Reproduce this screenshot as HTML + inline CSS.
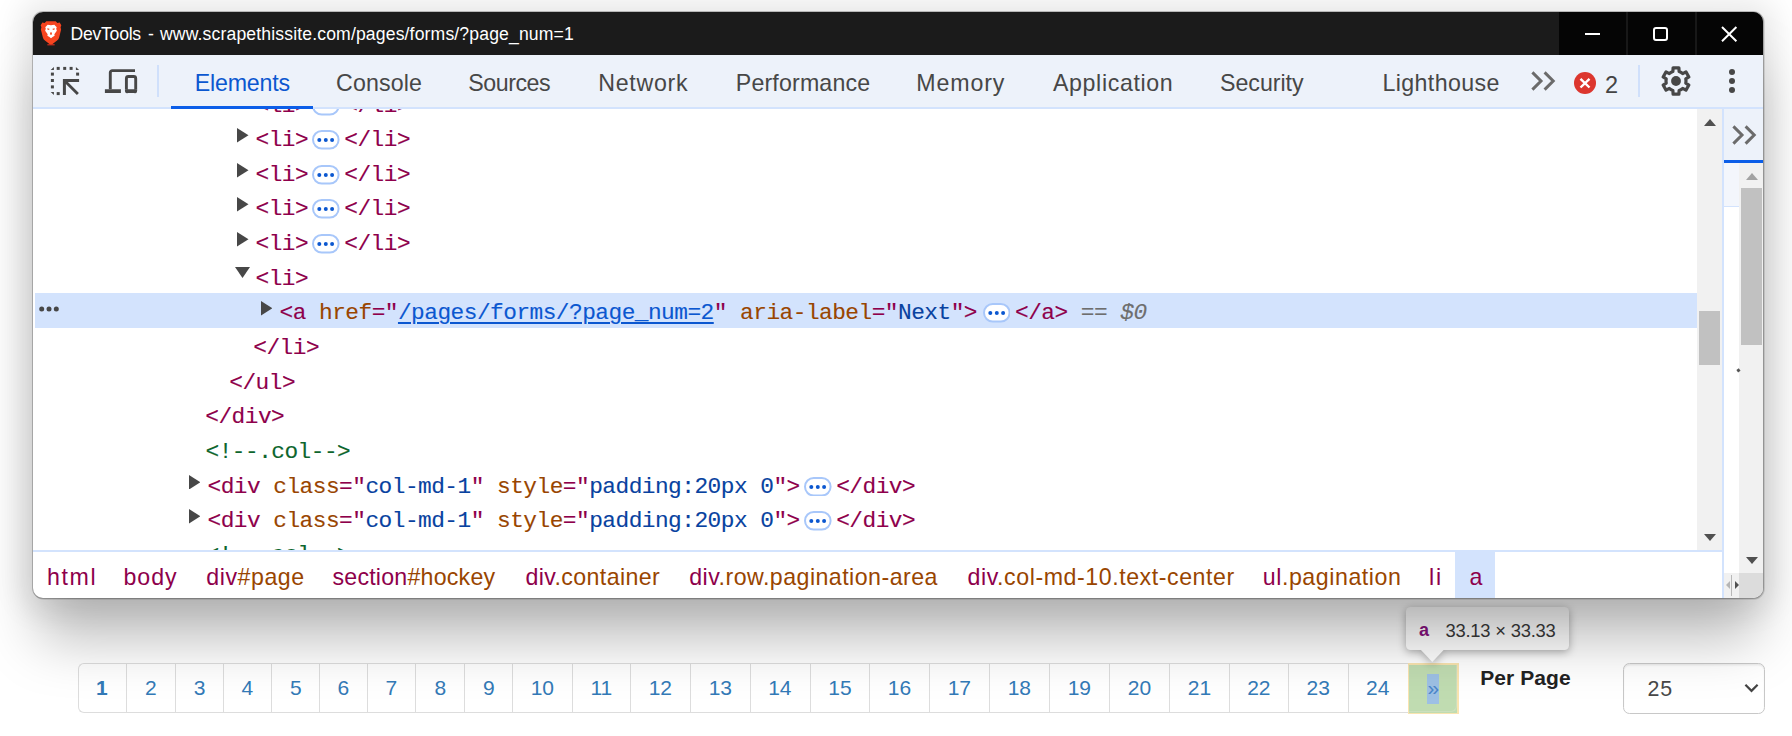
<!DOCTYPE html>
<html lang="en"><head><meta charset="utf-8"><title>DevTools - www.scrapethissite.com/pages/forms/?page_num=1</title>
<style>
html,body{margin:0;padding:0}
body{width:1792px;height:736px;overflow:hidden;background:#fff;position:relative;font-family:'Liberation Sans', sans-serif}
.t,.m,.a,.pill,.abs{position:absolute;white-space:pre}
.t{display:block}
.m{font:22.8px/30px 'Liberation Mono', monospace;-webkit-text-stroke:0.12px currentColor;letter-spacing:-0.522px}
#pg{position:absolute;left:0;top:0;width:1792px;height:736px}
.pc{position:absolute;top:663px;height:49.5px;box-sizing:border-box;border:1px solid #ddd;border-right:none;background:#fff}
#win{position:absolute;left:33px;top:12px;width:1730px;height:586px;border-radius:10px;background:#fff;
 box-shadow:0 0 0 1px rgba(0,0,0,.2), .8px .8px 0 1px rgba(0,0,0,.13), 0 48px 56px -6px rgba(0,0,0,.255), 0 0 30px 12px rgba(0,0,0,.09)}
#clip{position:absolute;left:0;top:0;width:1730px;height:586px;border-radius:10px;overflow:hidden}
#in{position:absolute;left:-33px;top:-12px;width:1792px;height:736px}
.r{position:absolute}
</style></head>
<body>
<div id="pg">
<div class="pc" style="left:78.25px;width:47.75px;border-radius:6px 0 0 6px"></div>
<span class="t" style="left:96.12px;top:673.72px;font:bold 21px/28px 'Liberation Sans', sans-serif;color:#337ab7">1</span>
<div class="pc" style="left:126.00px;width:48.75px"></div>
<span class="t" style="left:144.88px;top:673.72px;font:normal 21px/28px 'Liberation Sans', sans-serif;color:#337ab7">2</span>
<div class="pc" style="left:174.75px;width:48.00px"></div>
<span class="t" style="left:193.75px;top:673.72px;font:normal 21px/28px 'Liberation Sans', sans-serif;color:#337ab7">3</span>
<div class="pc" style="left:222.75px;width:48.25px"></div>
<span class="t" style="left:241.38px;top:673.72px;font:normal 21px/28px 'Liberation Sans', sans-serif;color:#337ab7">4</span>
<div class="pc" style="left:271.00px;width:48.00px"></div>
<span class="t" style="left:290.00px;top:673.72px;font:normal 21px/28px 'Liberation Sans', sans-serif;color:#337ab7">5</span>
<div class="pc" style="left:319.00px;width:48.00px"></div>
<span class="t" style="left:337.50px;top:673.72px;font:normal 21px/28px 'Liberation Sans', sans-serif;color:#337ab7">6</span>
<div class="pc" style="left:367.00px;width:48.00px"></div>
<span class="t" style="left:385.50px;top:673.72px;font:normal 21px/28px 'Liberation Sans', sans-serif;color:#337ab7">7</span>
<div class="pc" style="left:415.00px;width:49.00px"></div>
<span class="t" style="left:434.50px;top:673.72px;font:normal 21px/28px 'Liberation Sans', sans-serif;color:#337ab7">8</span>
<div class="pc" style="left:464.00px;width:48.00px"></div>
<span class="t" style="left:483.00px;top:673.72px;font:normal 21px/28px 'Liberation Sans', sans-serif;color:#337ab7">9</span>
<div class="pc" style="left:512.00px;width:60.00px"></div>
<span class="t" style="left:530.66px;top:673.72px;font:normal 21px/28px 'Liberation Sans', sans-serif;color:#337ab7">10</span>
<div class="pc" style="left:572.00px;width:58.00px"></div>
<span class="t" style="left:590.44px;top:673.72px;font:normal 21px/28px 'Liberation Sans', sans-serif;color:#337ab7">11</span>
<div class="pc" style="left:630.00px;width:60.00px"></div>
<span class="t" style="left:648.66px;top:673.72px;font:normal 21px/28px 'Liberation Sans', sans-serif;color:#337ab7">12</span>
<div class="pc" style="left:690.00px;width:60.00px"></div>
<span class="t" style="left:708.66px;top:673.72px;font:normal 21px/28px 'Liberation Sans', sans-serif;color:#337ab7">13</span>
<div class="pc" style="left:750.00px;width:60.00px"></div>
<span class="t" style="left:768.16px;top:673.72px;font:normal 21px/28px 'Liberation Sans', sans-serif;color:#337ab7">14</span>
<div class="pc" style="left:810.00px;width:59.25px"></div>
<span class="t" style="left:828.29px;top:673.72px;font:normal 21px/28px 'Liberation Sans', sans-serif;color:#337ab7">15</span>
<div class="pc" style="left:869.25px;width:59.75px"></div>
<span class="t" style="left:887.79px;top:673.72px;font:normal 21px/28px 'Liberation Sans', sans-serif;color:#337ab7">16</span>
<div class="pc" style="left:929.00px;width:60.00px"></div>
<span class="t" style="left:947.66px;top:673.72px;font:normal 21px/28px 'Liberation Sans', sans-serif;color:#337ab7">17</span>
<div class="pc" style="left:989.00px;width:60.00px"></div>
<span class="t" style="left:1007.66px;top:673.72px;font:normal 21px/28px 'Liberation Sans', sans-serif;color:#337ab7">18</span>
<div class="pc" style="left:1049.00px;width:60.00px"></div>
<span class="t" style="left:1067.66px;top:673.72px;font:normal 21px/28px 'Liberation Sans', sans-serif;color:#337ab7">19</span>
<div class="pc" style="left:1109.00px;width:60.25px"></div>
<span class="t" style="left:1127.79px;top:673.72px;font:normal 21px/28px 'Liberation Sans', sans-serif;color:#337ab7">20</span>
<div class="pc" style="left:1169.25px;width:59.75px"></div>
<span class="t" style="left:1187.79px;top:673.72px;font:normal 21px/28px 'Liberation Sans', sans-serif;color:#337ab7">21</span>
<div class="pc" style="left:1229.00px;width:59.00px"></div>
<span class="t" style="left:1247.16px;top:673.72px;font:normal 21px/28px 'Liberation Sans', sans-serif;color:#337ab7">22</span>
<div class="pc" style="left:1288.00px;width:59.75px"></div>
<span class="t" style="left:1306.54px;top:673.72px;font:normal 21px/28px 'Liberation Sans', sans-serif;color:#337ab7">23</span>
<div class="pc" style="left:1347.75px;width:60.25px"></div>
<span class="t" style="left:1366.04px;top:673.72px;font:normal 21px/28px 'Liberation Sans', sans-serif;color:#337ab7">24</span>
<!-- highlighted next cell -->
<div class="r" style="left:1407.7px;top:663.2px;width:51px;height:51.2px;background:#f9e4b0"></div>
<div class="r" style="left:1409.3px;top:664.8px;width:47.8px;height:48px;background:#c0dcb1"></div>
<div class="r" style="left:1409.3px;top:664.8px;width:47.3px;height:47.3px;box-sizing:border-box;border:1px solid #cfe0c0;border-left:none;border-top:none;border-radius:0 0 6px 0;opacity:.9"></div>
<div class="r" style="left:1427px;top:673.7px;width:12.2px;height:30.1px;background:#9dc0e4"></div>
<span class="t" style="left:1427.6px;top:673.6px;font:21px/28px 'Liberation Sans', sans-serif;color:#4a86c9">»</span>
<!-- select -->
<div class="r" style="left:1623px;top:663px;width:142px;height:51px;box-sizing:border-box;border:1px solid #c8c8c8;border-radius:6.5px;background:#fff;box-shadow:inset 0 1.5px 1.5px rgba(0,0,0,.075)"></div>
<svg class="abs" style="left:1743.5px;top:683px" width="15" height="10" viewBox="0 0 15 10"><path d="M1.4 1.8L7.5 7.9L13.6 1.8" fill="none" stroke="#444" stroke-width="2.2"/></svg>
<span class="t" style="left:1480.20px;top:663.62px;font:normal bold 21px/27px 'Liberation Sans', sans-serif;letter-spacing:0.085px;color:#222;">Per Page</span>
<span class="t" style="left:1647.40px;top:674.58px;font:normal normal 21.4px/28px 'Liberation Sans', sans-serif;letter-spacing:0.904px;color:#484848;">25</span>
<!-- tooltip -->
<div class="r" style="left:0;top:0;width:1792px;height:736px;filter:drop-shadow(0 2px 4px rgba(0,0,0,.33))">
<div class="r" style="left:1406px;top:606.8px;width:162.8px;height:43px;border-radius:4.5px;background:#fff"></div>
<svg class="abs" style="left:1420.4px;top:649.3px" width="24.6" height="13.2" viewBox="0 0 24.6 13.2"><path d="M0 0L24.6 0L12.3 12.9Z" fill="#fff"/></svg>
</div>
<span class="t" style="left:1419.00px;top:619.06px;font:normal bold 18px/23px 'Liberation Sans', sans-serif;letter-spacing:0.000px;color:#881280;">a</span>
<span class="t" style="left:1445.40px;top:618.62px;font:normal normal 18.4px/24px 'Liberation Sans', sans-serif;letter-spacing:-0.214px;color:#3a3a3a;">33.13 × 33.33</span>
</div>

<div id="win"><div id="clip"><div id="in">
<!-- title bar -->
<div class="r" style="left:33px;top:12px;width:1730px;height:42.5px;background:#1b1b1b"></div>
<div class="r" style="left:1559px;top:12px;width:204px;height:42.5px;background:#050505"></div>
<div class="r" style="left:1626px;top:12px;width:1.5px;height:42.5px;background:#181818"></div>
<div class="r" style="left:1695px;top:12px;width:1.5px;height:42.5px;background:#181818"></div>
<svg class="abs" style="left:39.4px;top:20px" width="24" height="26" viewBox="0 0 23 26" preserveAspectRatio="none">

 <path d="M7 1.2h9l1.6 1.8 2.2-.4 1.6 2.6-.7 2 .5 2.2-1.9 8.2c-.3 1.2-1 2.2-2 3l-4.3 3.3c-.9.7-2.1.7-3 0L5.700 20.600c-1-.8-1.700-1.800-2-3L1.800 9.400l.5-2.200-.7-2 1.600-2.600 2.200.4z" fill="#f6441f"/>
 <path d="M11.5 5.200l3.200-.5 2.300 2.500-.5 1.500.6 2-2.400 3.600.3 1.500-2 1.200-1.500 1.300-1.500-1.300-2-1.200.3-1.500L5.900 10.700l.6-2L6 7.200l2.300-2.500z" fill="#fff"/>
 <path d="M8 8.300l2 .4-.3 1.200-1.700-.3zM15 8.300l-2 .4.300 1.200 1.700-.3zM10.500 12.500h2l-.3 2.300h-1.400z" fill="#f5491f"/>
 <rect x="8" y="24.300" width="7" height="1" fill="#f0321e"/>
</svg>
<span class="t" style="left:70.60px;top:22.60px;font:normal normal 17.6px/23px 'Liberation Sans', sans-serif;letter-spacing:-0.266px;color:#fff;">DevTools</span><span class="t" style="left:148.10px;top:22.60px;font:normal normal 17.6px/23px 'Liberation Sans', sans-serif;letter-spacing:0.000px;color:#fff;">-</span><span class="t" style="left:160.00px;top:22.60px;font:normal normal 17.6px/23px 'Liberation Sans', sans-serif;letter-spacing:0.144px;color:#fff;">www.scrapethissite.com/pages/forms/?page_num=1</span>
<!-- caption buttons -->
<div class="r" style="left:1584.75px;top:32.75px;width:15.5px;height:2px;background:#fff"></div>
<div class="r" style="left:1653px;top:26.75px;width:15px;height:14.5px;box-sizing:border-box;border:2px solid #fff;border-radius:3px"></div>
<svg class="abs" style="left:1720.2px;top:25.2px" width="18" height="18" viewBox="0 0 18 18"><path d="M2 2L16.400 16.200M16.400 2L2 16.200" stroke="#fff" stroke-width="2" fill="none"/></svg>

<!-- toolbar -->
<div class="r" style="left:33px;top:54.5px;width:1730px;height:52.5px;background:#edf2fa"></div>
<div class="r" style="left:33px;top:106.9px;width:1730px;height:1.9px;background:#d3e3fd"></div>
<div class="r" style="left:171px;top:105.9px;width:142px;height:2.9px;background:#0c5ee8"></div>
<!-- inspect icon -->
<svg class="abs" style="left:50px;top:66px" width="30" height="30" viewBox="0 0 30 30" fill="#474747">
 <path d="M.7 3.900L3.900 .900V3.900zM29.100 3.900L25.900 .900V3.900zM.7 26.100L3.900 29.100V26.100z"/>
 <rect x="6.700" y=".9" width="3" height="3"/><rect x="13.200" y=".9" width="3" height="3"/><rect x="19.600" y=".9" width="3" height="3"/>
 <rect x=".9" y="6.600" width="3" height="3"/><rect x=".9" y="13" width="3" height="3"/><rect x=".9" y="19.400" width="3" height="3"/>
 <rect x="26.100" y="6.600" width="3" height="3"/>
 <rect x="6.700" y="26.100" width="3" height="3"/>
 <path d="M12.900 13H29.100V15.900H17.900L28.900 26.900L26.900 28.900L15.900 17.900V29.100H12.900z"/>
</svg>
<!-- device icon -->
<svg class="abs" style="left:104px;top:68px" width="35" height="27" viewBox="0 0 35 27" fill="none" stroke="#474747">
 <path d="M31 2.600H8.300a2 2 0 0 0-2 2V21.200" stroke-width="2.900"/>
 <path d="M.9 23.100H16.900" stroke-width="3.800"/>
 <path d="M22.400 21.200V10.500a2 2 0 0 1 2-2h5.300a2 2 0 0 1 2 2V21.200" stroke-width="2.900"/>
 <path d="M23.400 23.100H30.700" stroke-width="3.800" stroke-linecap="round"/>
 <path d="M22.400 21.200V23a1 1 0 0 0 1 1M31.700 21.200V23a1 1 0 0 1-1 1" stroke-width="2.900"/>
</svg>
<div class="r" style="left:157.2px;top:65px;width:1.7px;height:32px;background:#d0e0fb"></div>
<span class="t" style="left:194.75px;top:67.56px;font:normal normal 23.2px/30px 'Liberation Sans', sans-serif;letter-spacing:-0.187px;color:#0b57d0;">Elements</span>
<span class="t" style="left:336.00px;top:67.56px;font:normal normal 23.2px/30px 'Liberation Sans', sans-serif;letter-spacing:0.137px;color:#474747;">Console</span>
<span class="t" style="left:468.25px;top:67.56px;font:normal normal 23.2px/30px 'Liberation Sans', sans-serif;letter-spacing:-0.453px;color:#474747;">Sources</span>
<span class="t" style="left:598.25px;top:67.56px;font:normal normal 23.2px/30px 'Liberation Sans', sans-serif;letter-spacing:0.717px;color:#474747;">Network</span>
<span class="t" style="left:735.75px;top:67.56px;font:normal normal 23.2px/30px 'Liberation Sans', sans-serif;letter-spacing:0.166px;color:#474747;">Performance</span>
<span class="t" style="left:916.25px;top:67.56px;font:normal normal 23.2px/30px 'Liberation Sans', sans-serif;letter-spacing:0.871px;color:#474747;">Memory</span>
<span class="t" style="left:1053.00px;top:67.56px;font:normal normal 23.2px/30px 'Liberation Sans', sans-serif;letter-spacing:0.621px;color:#474747;">Application</span>
<span class="t" style="left:1220.00px;top:67.56px;font:normal normal 23.2px/30px 'Liberation Sans', sans-serif;letter-spacing:-0.024px;color:#474747;">Security</span>
<span class="t" style="left:1382.50px;top:67.56px;font:normal normal 23.2px/30px 'Liberation Sans', sans-serif;letter-spacing:0.382px;color:#474747;">Lighthouse</span>
<span class="t" style="left:1605.00px;top:69.56px;font:normal normal 23.5px/31px 'Liberation Sans', sans-serif;letter-spacing:0.000px;color:#444;">2</span>
<!-- more tabs chevrons -->
<svg class="abs" style="left:1530px;top:70px" width="27" height="22" viewBox="0 0 27 22" fill="none" stroke="#6b6b6b" stroke-width="3"><path d="M2.400 2.400L11 11L2.400 19.600M14.600 2.400L23.200 11L14.600 19.600"/></svg>
<!-- error badge -->
<div class="r" style="left:1573.8px;top:71.700px;width:22.5px;height:22.5px;border-radius:50%;background:#dc362e"></div>
<svg class="abs" style="left:1579px;top:77px" width="12" height="12" viewBox="0 0 12 12"><path d="M1.500 1.900L10.500 10.500M10.500 1.900L1.500 10.500" stroke="#fff" stroke-width="2.400" fill="none"/></svg>
<div class="r" style="left:1638.4px;top:65px;width:1.7px;height:32px;background:#d0e0fb"></div>
<!-- gear -->
<svg class="abs" style="left:1657.90px;top:62.90px" width="36" height="36" viewBox="0 0 36 36"><path d="M21.09 8.49L20.92 4.82L15.08 4.82L14.91 8.49A10.0 10.0 0 0 0 11.31 10.57L8.05 8.88L5.12 13.94L8.22 15.92A10.0 10.0 0 0 0 8.22 20.08L5.12 22.06L8.05 27.12L11.31 25.43A10.0 10.0 0 0 0 14.91 27.51L15.08 31.18L20.92 31.18L21.09 27.51A10.0 10.0 0 0 0 24.69 25.43L27.95 27.12L30.88 22.06L27.78 20.08A10.0 10.0 0 0 0 27.78 15.92L30.88 13.94L27.95 8.88L24.69 10.57A10.0 10.0 0 0 0 21.09 8.49Z" fill="none" stroke="#474747" stroke-width="3.2" stroke-linejoin="round"/><circle cx="18" cy="18" r="4.9" fill="#474747"/></svg>
<div class="r" style="left:1728.600px;top:68.700px;width:6.600px;height:6.600px;border-radius:50%;background:#474747"></div>
<div class="r" style="left:1728.600px;top:77.700px;width:6.600px;height:6.600px;border-radius:50%;background:#474747"></div>
<div class="r" style="left:1728.600px;top:86.700px;width:6.600px;height:6.600px;border-radius:50%;background:#474747"></div>

<!-- elements tree -->
<div class="r" id="tree" style="left:33px;top:108.8px;width:1664px;height:441.1px;overflow:hidden;background:#fff">
<div class="r" style="left:-33px;top:-108.8px;width:1792px;height:736px">
<div class="r" style="left:35px;top:293.2px;width:1662px;height:34.5px;background:#d3e3fd"></div>
<svg class="abs" style="left:38px;top:305px" width="22" height="8" viewBox="0 0 22 8" fill="#474747"><circle cx="3.7" cy="4" r="2.5"/><circle cx="11" cy="4" r="2.5"/><circle cx="18.3" cy="4" r="2.5"/></svg>
<svg class="a" style="left:237.00px;top:94.05px" width="11.5" height="14.5" viewBox="0 0 11.5 14.5"><path d="M0 0L11.5 7.25L0 14.5Z" fill="#474747"/></svg>
<span class="m" style="left:255.50px;top:90.92px;"><span style="color:#8e004b">&lt;li&gt;</span></span>
<svg class="a" style="left:312.00px;top:96.05px" width="27.6" height="19.5" viewBox="0 0 27.6 19.5"><rect x="1" y="1" width="25.6" height="17.5" rx="8.75" fill="#fff" stroke="#a8c7fa" stroke-width="2"/><circle cx="7.3" cy="9.9" r="2" fill="#0b57d0"/><circle cx="13.8" cy="9.9" r="2" fill="#0b57d0"/><circle cx="20.1" cy="9.9" r="2" fill="#0b57d0"/></svg>
<span class="m" style="left:344.30px;top:90.92px;"><span style="color:#8e004b">&lt;/li&gt;</span></span>
<svg class="a" style="left:237.00px;top:128.05px" width="11.5" height="14.5" viewBox="0 0 11.5 14.5"><path d="M0 0L11.5 7.25L0 14.5Z" fill="#474747"/></svg>
<span class="m" style="left:255.50px;top:124.92px;"><span style="color:#8e004b">&lt;li&gt;</span></span>
<svg class="a" style="left:312.00px;top:130.05px" width="27.6" height="19.5" viewBox="0 0 27.6 19.5"><rect x="1" y="1" width="25.6" height="17.5" rx="8.75" fill="#fff" stroke="#a8c7fa" stroke-width="2"/><circle cx="7.3" cy="9.9" r="2" fill="#0b57d0"/><circle cx="13.8" cy="9.9" r="2" fill="#0b57d0"/><circle cx="20.1" cy="9.9" r="2" fill="#0b57d0"/></svg>
<span class="m" style="left:344.30px;top:124.92px;"><span style="color:#8e004b">&lt;/li&gt;</span></span>
<svg class="a" style="left:237.00px;top:163.05px" width="11.5" height="14.5" viewBox="0 0 11.5 14.5"><path d="M0 0L11.5 7.25L0 14.5Z" fill="#474747"/></svg>
<span class="m" style="left:255.50px;top:159.92px;"><span style="color:#8e004b">&lt;li&gt;</span></span>
<svg class="a" style="left:312.00px;top:165.05px" width="27.6" height="19.5" viewBox="0 0 27.6 19.5"><rect x="1" y="1" width="25.6" height="17.5" rx="8.75" fill="#fff" stroke="#a8c7fa" stroke-width="2"/><circle cx="7.3" cy="9.9" r="2" fill="#0b57d0"/><circle cx="13.8" cy="9.9" r="2" fill="#0b57d0"/><circle cx="20.1" cy="9.9" r="2" fill="#0b57d0"/></svg>
<span class="m" style="left:344.30px;top:159.92px;"><span style="color:#8e004b">&lt;/li&gt;</span></span>
<svg class="a" style="left:237.00px;top:197.45px" width="11.5" height="14.5" viewBox="0 0 11.5 14.5"><path d="M0 0L11.5 7.25L0 14.5Z" fill="#474747"/></svg>
<span class="m" style="left:255.50px;top:194.32px;"><span style="color:#8e004b">&lt;li&gt;</span></span>
<svg class="a" style="left:312.00px;top:199.45px" width="27.6" height="19.5" viewBox="0 0 27.6 19.5"><rect x="1" y="1" width="25.6" height="17.5" rx="8.75" fill="#fff" stroke="#a8c7fa" stroke-width="2"/><circle cx="7.3" cy="9.9" r="2" fill="#0b57d0"/><circle cx="13.8" cy="9.9" r="2" fill="#0b57d0"/><circle cx="20.1" cy="9.9" r="2" fill="#0b57d0"/></svg>
<span class="m" style="left:344.30px;top:194.32px;"><span style="color:#8e004b">&lt;/li&gt;</span></span>
<svg class="a" style="left:237.00px;top:232.05px" width="11.5" height="14.5" viewBox="0 0 11.5 14.5"><path d="M0 0L11.5 7.25L0 14.5Z" fill="#474747"/></svg>
<span class="m" style="left:255.50px;top:228.92px;"><span style="color:#8e004b">&lt;li&gt;</span></span>
<svg class="a" style="left:312.00px;top:234.05px" width="27.6" height="19.5" viewBox="0 0 27.6 19.5"><rect x="1" y="1" width="25.6" height="17.5" rx="8.75" fill="#fff" stroke="#a8c7fa" stroke-width="2"/><circle cx="7.3" cy="9.9" r="2" fill="#0b57d0"/><circle cx="13.8" cy="9.9" r="2" fill="#0b57d0"/><circle cx="20.1" cy="9.9" r="2" fill="#0b57d0"/></svg>
<span class="m" style="left:344.30px;top:228.92px;"><span style="color:#8e004b">&lt;/li&gt;</span></span>
<svg class="a" style="left:234.50px;top:266.90px" width="15" height="11" viewBox="0 0 15 11"><path d="M0 0L15 0L7.5 11Z" fill="#474747"/></svg><span class="m" style="left:255.50px;top:263.92px;"><span style="color:#8e004b">&lt;li&gt;</span></span>
<svg class="a" style="left:260.50px;top:301.45px" width="11.5" height="14.5" viewBox="0 0 11.5 14.5"><path d="M0 0L11.5 7.25L0 14.5Z" fill="#474747"/></svg>
<span class="m" style="left:279.50px;top:298.32px;"><span style="color:#8e004b">&lt;a</span><span style="color:#994500"> href</span><span style="color:#8e004b">=&quot;</span><span style="color:#0b57d0;text-decoration:underline;text-decoration-thickness:1.5px;text-underline-offset:3px">/pages/forms/?page_num=2</span><span style="color:#8e004b">&quot;</span><span style="color:#994500"> aria-label</span><span style="color:#8e004b">=&quot;</span><span style="color:#0842a0">Next</span><span style="color:#8e004b">&quot;&gt;</span></span>
<svg class="a" style="left:982.50px;top:303.45px" width="27.6" height="19.5" viewBox="0 0 27.6 19.5"><rect x="1" y="1" width="25.6" height="17.5" rx="8.75" fill="#fff" stroke="#a8c7fa" stroke-width="2"/><circle cx="7.3" cy="9.9" r="2" fill="#0b57d0"/><circle cx="13.8" cy="9.9" r="2" fill="#0b57d0"/><circle cx="20.1" cy="9.9" r="2" fill="#0b57d0"/></svg>
<span class="m" style="left:1015.00px;top:298.32px;"><span style="color:#8e004b">&lt;/a&gt;</span></span>
<span class="m" style="left:1080.80px;top:298.32px;font-style:italic"><span style="color:#6e6e6e">== $0</span></span>
<span class="m" style="left:253.30px;top:332.92px;"><span style="color:#8e004b">&lt;/li&gt;</span></span>
<span class="m" style="left:229.30px;top:367.62px;"><span style="color:#8e004b">&lt;/ul&gt;</span></span>
<span class="m" style="left:205.30px;top:401.92px;"><span style="color:#8e004b">&lt;/div&gt;</span></span>
<span class="m" style="left:205.50px;top:436.92px;"><span style="color:#0d652d">&lt;!--.col--&gt;</span></span>
<svg class="a" style="left:188.75px;top:474.65px" width="11.5" height="14.5" viewBox="0 0 11.5 14.5"><path d="M0 0L11.5 7.25L0 14.5Z" fill="#474747"/></svg>
<span class="m" style="left:207.50px;top:471.52px;"><span style="color:#8e004b">&lt;div</span><span style="color:#994500"> class</span><span style="color:#8e004b">=&quot;</span><span style="color:#0842a0">col-md-1</span><span style="color:#8e004b">&quot;</span><span style="color:#994500"> style</span><span style="color:#8e004b">=&quot;</span><span style="color:#0842a0">padding:20px 0</span><span style="color:#8e004b">&quot;&gt;</span></span>
<svg class="a" style="left:804.20px;top:476.65px" width="27.6" height="19.5" viewBox="0 0 27.6 19.5"><rect x="1" y="1" width="25.6" height="17.5" rx="8.75" fill="#fff" stroke="#a8c7fa" stroke-width="2"/><circle cx="7.3" cy="9.9" r="2" fill="#0b57d0"/><circle cx="13.8" cy="9.9" r="2" fill="#0b57d0"/><circle cx="20.1" cy="9.9" r="2" fill="#0b57d0"/></svg>
<span class="m" style="left:836.20px;top:471.52px;"><span style="color:#8e004b">&lt;/div&gt;</span></span>
<svg class="a" style="left:188.75px;top:509.25px" width="11.5" height="14.5" viewBox="0 0 11.5 14.5"><path d="M0 0L11.5 7.25L0 14.5Z" fill="#474747"/></svg>
<span class="m" style="left:207.50px;top:506.12px;"><span style="color:#8e004b">&lt;div</span><span style="color:#994500"> class</span><span style="color:#8e004b">=&quot;</span><span style="color:#0842a0">col-md-1</span><span style="color:#8e004b">&quot;</span><span style="color:#994500"> style</span><span style="color:#8e004b">=&quot;</span><span style="color:#0842a0">padding:20px 0</span><span style="color:#8e004b">&quot;&gt;</span></span>
<svg class="a" style="left:804.20px;top:511.25px" width="27.6" height="19.5" viewBox="0 0 27.6 19.5"><rect x="1" y="1" width="25.6" height="17.5" rx="8.75" fill="#fff" stroke="#a8c7fa" stroke-width="2"/><circle cx="7.3" cy="9.9" r="2" fill="#0b57d0"/><circle cx="13.8" cy="9.9" r="2" fill="#0b57d0"/><circle cx="20.1" cy="9.9" r="2" fill="#0b57d0"/></svg>
<span class="m" style="left:836.20px;top:506.12px;"><span style="color:#8e004b">&lt;/div&gt;</span></span>
<span class="m" style="left:205.50px;top:539.92px;"><span style="color:#0d652d">&lt;!--.col--&gt;</span></span>
</div></div>
<!-- main scrollbar -->
<div class="r" style="left:1697px;top:108.8px;width:25.5px;height:441.1px;background:#f1f1f1"></div>
<div class="r" style="left:1699px;top:311px;width:21px;height:53.700px;background:#c1c1c1"></div>
<svg class="abs" style="left:1703.5px;top:119px" width="12" height="7" viewBox="0 0 12 7"><path d="M0 7L6 0L12 7Z" fill="#505050"/></svg>
<svg class="abs" style="left:1703.5px;top:533.5px" width="12" height="7" viewBox="0 0 12 7"><path d="M0 0L6 7L12 0Z" fill="#505050"/></svg>
<!-- split line -->
<div class="r" style="left:1722px;top:108.8px;width:1.9px;height:490px;background:#d3e3fd"></div>
<!-- right pane -->
<div class="r" style="left:1723.9px;top:108.8px;width:39.1px;height:51.2px;background:#edf2fa"></div>
<svg class="abs" style="left:1730.5px;top:123.6px" width="27" height="22" viewBox="0 0 27 22" fill="none" stroke="#6b6b6b" stroke-width="3"><path d="M2.400 2.400L11 11L2.400 19.600M14.600 2.400L23.200 11L14.600 19.600"/></svg>
<div class="r" style="left:1723.9px;top:159.9px;width:39.1px;height:3px;background:#0c5ee8"></div>
<div class="r" style="left:1724px;top:163.200px;width:15.300px;height:42.500px;background:#f3f6fc"></div>
<div class="r" style="left:1724px;top:205.500px;width:15.300px;height:1.300px;background:#d3e3fd"></div>
<div class="r" style="left:1739.300px;top:163.200px;width:23.700px;height:410px;background:#f1f1f1"></div>
<div class="r" style="left:1741px;top:188px;width:21px;height:156.800px;background:#c1c1c1"></div>
<svg class="abs" style="left:1745.500px;top:173px" width="12" height="7" viewBox="0 0 12 7"><path d="M0 7L6 0L12 7Z" fill="#a3a3a3"/></svg>
<svg class="abs" style="left:1745.500px;top:557px" width="12" height="7" viewBox="0 0 12 7"><path d="M0 0L6 7L12 0Z" fill="#505050"/></svg>
<div class="r" style="left:1736.500px;top:368.500px;width:2.500px;height:3px;background:#555;transform:rotate(-35deg)"></div>
<!-- right bottom h-scrollbar -->
<div class="r" style="left:1724px;top:573px;width:15.300px;height:25px;background:#f1f1f1"></div>
<div class="r" style="left:1739.300px;top:573px;width:23.700px;height:25px;background:#dcdcdc"></div>
<svg class="abs" style="left:1726.2px;top:581.3px" width="4" height="8" viewBox="0 0 4 8"><path d="M4 0L0 4L4 8Z" fill="#b5b5b5"/></svg>
<svg class="abs" style="left:1734.6px;top:581.3px" width="4" height="8" viewBox="0 0 4 8"><path d="M0 0L4 4L0 8Z" fill="#505050"/></svg>
<div class="r" style="left:1731.400px;top:575px;width:1px;height:21px;background:#b8b8b8"></div>
<!-- breadcrumbs -->
<div class="r" style="left:33px;top:549.9px;width:1689.5px;height:2px;background:#d3e3fd"></div>
<div class="r" style="left:1455px;top:551.9px;width:40px;height:47px;background:#d3e3fd"></div>
<span class="t" style="left:47.00px;top:561.96px;font:normal normal 23.2px/30px 'Liberation Sans', sans-serif;letter-spacing:1.616px;color:#8e004b;">html</span>
<span class="t" style="left:123.50px;top:561.96px;font:normal normal 23.2px/30px 'Liberation Sans', sans-serif;letter-spacing:0.938px;color:#8e004b;">body</span>
<span class="t" style="left:206.25px;top:561.96px;font:normal normal 23.2px/30px 'Liberation Sans', sans-serif;letter-spacing:0.539px;color:#000;"><span style="color:#8e004b">div</span><span style="color:#994500">#page</span></span>
<span class="t" style="left:332.50px;top:561.96px;font:normal normal 23.2px/30px 'Liberation Sans', sans-serif;letter-spacing:0.212px;color:#000;"><span style="color:#8e004b">section</span><span style="color:#994500">#hockey</span></span>
<span class="t" style="left:525.50px;top:561.96px;font:normal normal 23.2px/30px 'Liberation Sans', sans-serif;letter-spacing:0.373px;color:#000;"><span style="color:#8e004b">div</span><span style="color:#994500">.container</span></span>
<span class="t" style="left:689.25px;top:561.96px;font:normal normal 23.2px/30px 'Liberation Sans', sans-serif;letter-spacing:0.460px;color:#000;"><span style="color:#8e004b">div</span><span style="color:#994500">.row.pagination-area</span></span>
<span class="t" style="left:967.50px;top:561.96px;font:normal normal 23.2px/30px 'Liberation Sans', sans-serif;letter-spacing:0.554px;color:#000;"><span style="color:#8e004b">div</span><span style="color:#994500">.col-md-10.text-center</span></span>
<span class="t" style="left:1262.75px;top:561.96px;font:normal normal 23.2px/30px 'Liberation Sans', sans-serif;letter-spacing:0.553px;color:#000;"><span style="color:#8e004b">ul</span><span style="color:#994500">.pagination</span></span>
<span class="t" style="left:1429.00px;top:561.96px;font:normal normal 23.2px/30px 'Liberation Sans', sans-serif;letter-spacing:1.848px;color:#8e004b;">li</span>
<span class="t" style="left:1469.50px;top:561.96px;font:normal normal 23.2px/30px 'Liberation Sans', sans-serif;letter-spacing:0.000px;color:#8e004b;">a</span>
</div></div></div>
</body></html>
